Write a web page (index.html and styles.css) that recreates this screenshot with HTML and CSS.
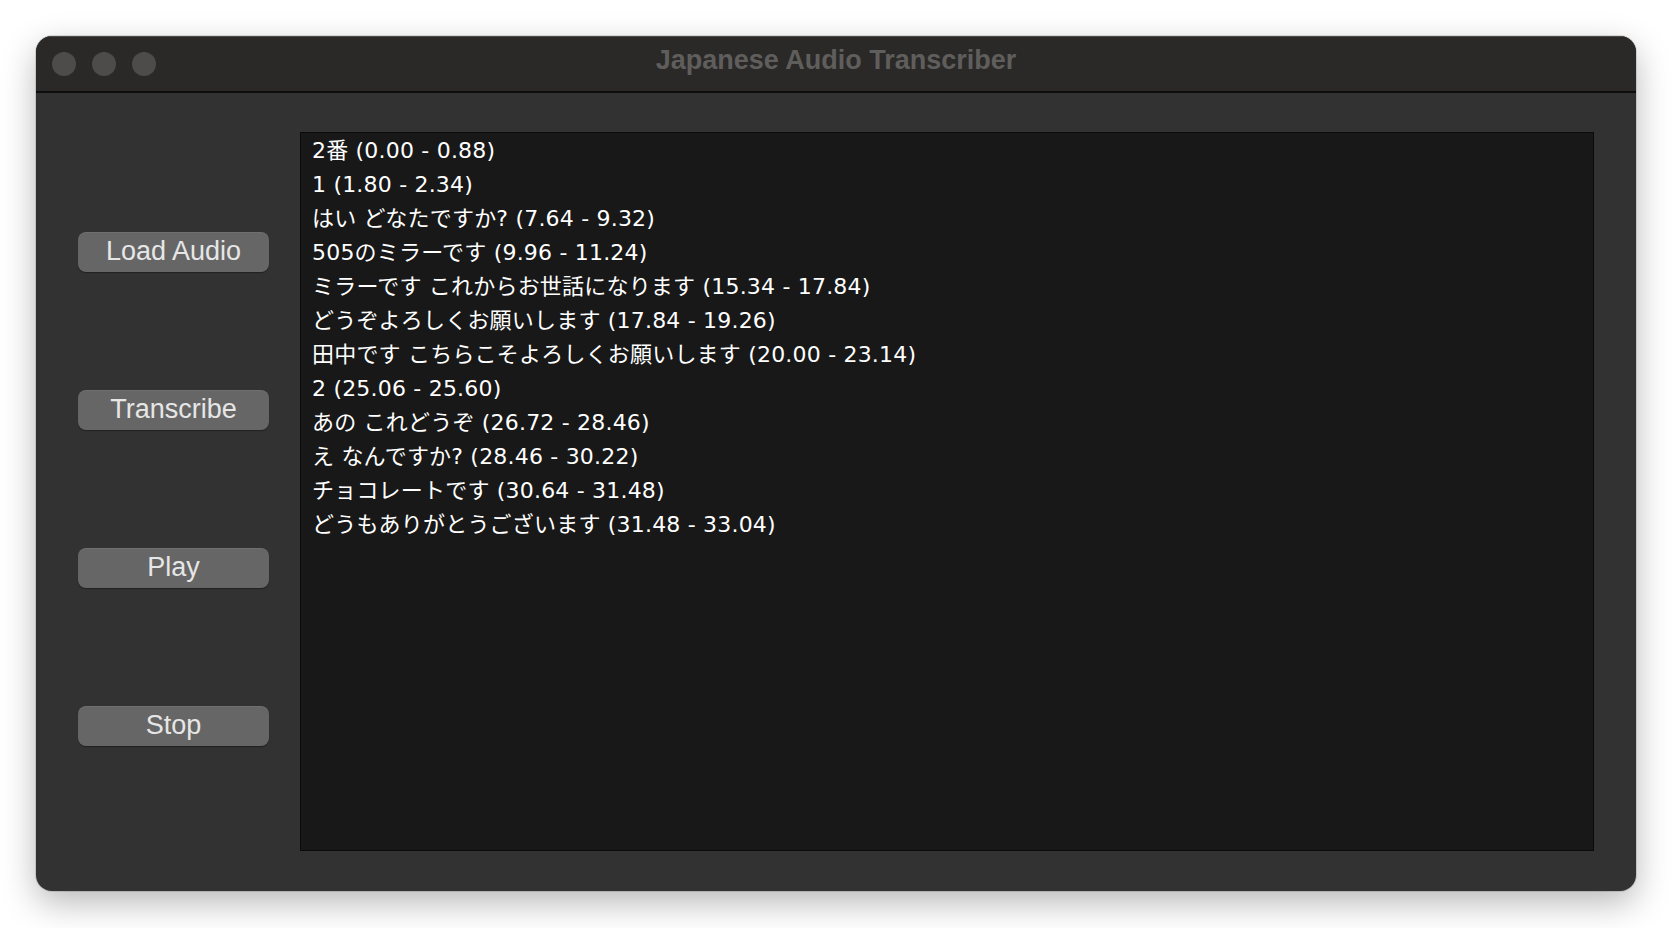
FILE: index.html
```html
<!DOCTYPE html>
<html lang="ja">
<head>
<meta charset="utf-8">
<title>Japanese Audio Transcriber</title>
<link rel="stylesheet" href="styles.css">
</head>
<body>
<div class="window">
  <div class="titlebar">
    <div class="lights">
      <span class="light"></span>
      <span class="light"></span>
      <span class="light"></span>
    </div>
    <div class="title">Japanese Audio Transcriber</div>
    <div class="spacer"></div>
  </div>
  <div class="content">
    <div class="sidebar">
      <button class="btn">Load Audio</button>
      <button class="btn">Transcribe</button>
      <button class="btn">Play</button>
      <button class="btn">Stop</button>
    </div>
    <div class="textbox">
      <div class="line">2番 (0.00 - 0.88)</div>
      <div class="line">1 (1.80 - 2.34)</div>
      <div class="line">はい どなたですか? (7.64 - 9.32)</div>
      <div class="line">505のミラーです (9.96 - 11.24)</div>
      <div class="line">ミラーです これからお世話になります (15.34 - 17.84)</div>
      <div class="line">どうぞよろしくお願いします (17.84 - 19.26)</div>
      <div class="line">田中です こちらこそよろしくお願いします (20.00 - 23.14)</div>
      <div class="line">2 (25.06 - 25.60)</div>
      <div class="line">あの これどうぞ (26.72 - 28.46)</div>
      <div class="line">え なんですか? (28.46 - 30.22)</div>
      <div class="line">チョコレートです (30.64 - 31.48)</div>
      <div class="line">どうもありがとうございます (31.48 - 33.04)</div>
    </div>
  </div>
</div>
</body>
</html>
```

FILE: styles.css
```css
html, body {
  margin: 0;
  padding: 0;
  background: #ffffff;
}
body {
  width: 1672px;
  height: 928px;
  overflow: hidden;
}
.window {
  margin: 36px 0 0 36px;
  width: 1600px;
  height: 855px;
  border-radius: 16px;
  overflow: hidden;
  background: #323232;
  box-shadow: 0 12px 34px rgba(0, 0, 0, 0.28), 0 0 0 1px rgba(0, 0, 0, 0.12);
  display: flex;
  flex-direction: column;
}
.titlebar {
  box-sizing: border-box;
  height: 57px;
  background: #2a2927;
  border-bottom: 2px solid #0d0d0d;
  box-shadow: inset 0 1px 0 rgba(255, 255, 255, 0.16);
  display: grid;
  grid-template-columns: 1fr auto 1fr;
  align-items: center;
  padding: 1px 16px 0 16px;
}
.lights {
  display: flex;
  gap: 16px;
}
.light {
  width: 24px;
  height: 24px;
  border-radius: 50%;
  background: #4d4c4b;
}
.title {
  font-family: "Liberation Sans", Arial, sans-serif;
  font-weight: bold;
  font-size: 27px;
  line-height: 27px;
  color: #5f5e5d;
  padding-bottom: 8px;
}
.content {
  flex: 1;
  display: flex;
  padding: 39px 42px 40px 42px;
  gap: 31px;
}
.sidebar {
  width: 191px;
  display: flex;
  flex-direction: column;
  padding-top: 100px;
  gap: 118px;
}
.btn {
  box-sizing: border-box;
  width: 191px;
  height: 40px;
  border: none;
  border-radius: 8px;
  background: #666666;
  color: #e6e6e6;
  font-family: "Liberation Sans", Arial, sans-serif;
  font-size: 27px;
  line-height: 38px;
  padding: 0 0 2px 0;
  box-shadow: 0 1px 1px rgba(0, 0, 0, 0.35), inset 0 1px 0 rgba(255, 255, 255, 0.06);
}
.textbox {
  flex: 1;
  background: #181818;
  border: 1px solid #0b0b0b;
  padding: 1px 11px;
  color: #ffffff;
  font-family: "DejaVu Sans", "Noto Sans CJK JP", sans-serif;
  font-size: 22px;
  letter-spacing: 0.2px;
}
.line {
  height: 34px;
  line-height: 34px;
  white-space: nowrap;
}
```
